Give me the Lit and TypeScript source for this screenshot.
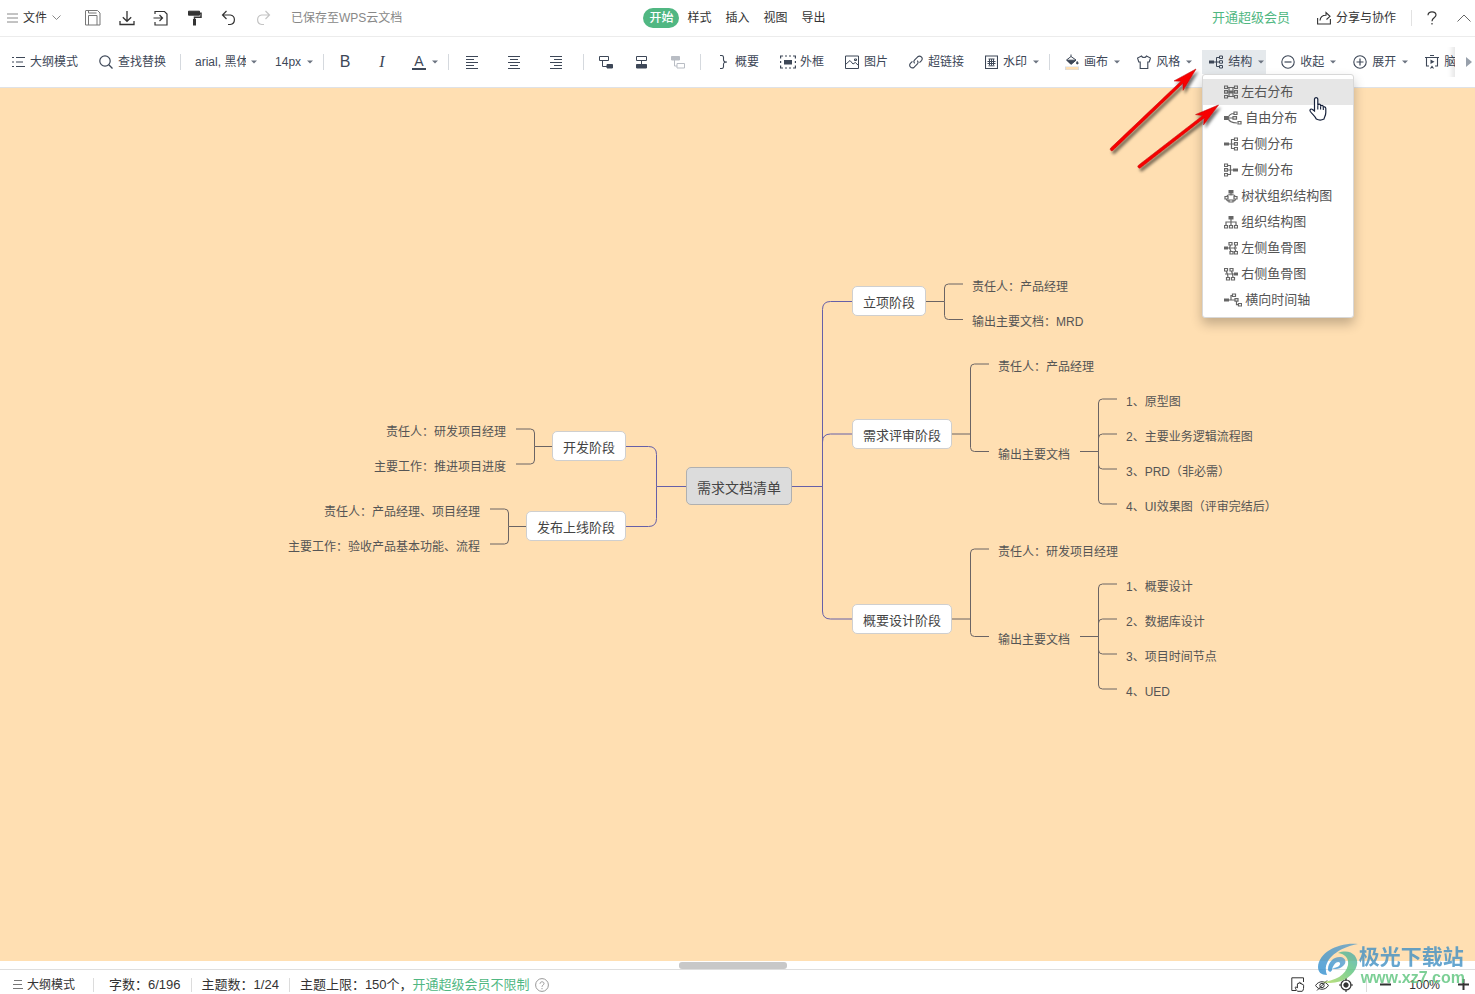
import { LitElement, html, css, svg } from "lit";
import { customElement, state } from "lit/decorators.js";
import { classMap } from "lit/directives/class-map.js";
import { styleMap } from "lit/directives/style-map.js";

const icon = (w: number, h: number, body: unknown) => html`<svg
  class="ic" width=${w} height=${h} viewBox="0 0 ${w} ${h}" fill="none"
  stroke="currentColor" stroke-width="1" aria-hidden="true">${body}</svg>`;

const caret = () => html`<svg class="caret" width="6" height="4" viewBox="0 0 6 4" aria-hidden="true"><path d="M0 0.5h6L3 3.5z" fill="currentColor"/></svg>`;

/* ---- title bar icons ---- */
const icSave = icon(16, 16, svg`<path d="M1 .5h11.5l2.5 2.5v12H.5V1a.5.5 0 0 1 .5-.5z"/><path d="M3.5 15V5.5h8.500V15M3.500 .5v2.500h8"/>`);
const icDownload = icon(16, 16, svg`<path d="M8 1v10M3.800 7.200L8 11.300l4.200-4.100M1 11v3.500h14V11" stroke-width="1.300"/>`);
const icExit = icon(16, 16, svg`<path d="M2 4V1.500h9.500L14 4v11H2v-3" stroke-width="1.200"/><path d="M.5 8h9M6.500 5l3 3-3 3" stroke-width="1.200"/>`);
const icPainter = icon(16, 16, svg`<path d="M1.500 1.200h11v4h-11z" fill="currentColor"/><path d="M12.500 3.200H14v4H7.500V10" stroke-width="1.500"/><path d="M6 9h3v6.500H6z" fill="currentColor" stroke="none"/>`);
const icUndo = icon(16, 16, svg`<path d="M5.500 1L1.500 5l4 4M1.500 5h7.800a4.800 4.800 0 0 1 0 9.500H7" stroke-width="1.200"/>`);
const icRedo = icon(16, 16, svg`<path d="M10.500 1l4 4-4 4M14.500 5H6.700a4.800 4.800 0 0 0 0 9.500H9" stroke-width="1.200"/>`);
const icShare = icon(14, 14, svg`<path d="M.6 7v6h12.800V8" stroke-width="1.100"/><path d="M3 9.500c.3-3.500 2.500-5.300 6-5.300V1.500L13 5.300 9.500 8.500" stroke-width="1.100"/>`);
const icHelp = icon(10, 14, svg`<path d="M1 4.200C1 2.200 2.600.8 5 .8s4 1.400 4 3.300C9 6.900 5 6.800 5 10.200M5 12v1.500" stroke-width="1.200"/>`);

/* ---- ribbon icons ---- */
const icList = icon(14, 12, svg`<path d="M0 1.500h2M0 6h2M0 10.500h2M4 1.500h9M4 6h7M4 10.500h9" stroke-width="1.100"/>`);
const icSearch = icon(14, 14, svg`<circle cx="6" cy="6" r="5.200" stroke-width="1.200"/><path d="M9.800 9.800l3.700 3.700" stroke-width="1.300"/>`);
const alignIcon = (starts: number[]) => icon(14, 14, svg`${[0, 1, 2, 3, 4].map((i) => svg`<path d="M${i % 2 ? starts[1] : starts[0]} ${i * 3 + 1.5}h${i % 2 ? 8 : 12}" stroke-width="1"/>`)}`);
const icSub = icon(14, 14, svg`<path d="M.5 1.500h9v4h-9z"/><path d="M3.500 5.500v6H8"/><path d="M8 9.500h5.500v3.500H8z" fill="currentColor"/>`);
const icTopic = icon(14, 14, svg`<path d="M1.500 1.500h10v4h-10zM6.500 5.500V9"/><path d="M1.500 9.500h10V13h-10z" fill="currentColor"/>`);
const icParent = icon(14, 14, svg`<path d="M.5 1.500h8V5h-8z" fill="currentColor"/><path d="M3.500 5v6H6M6 8.500h7.500V13H6z"/>`);
const icBrace = icon(14, 14, svg`<path d="M3 .5h1.500C6 .5 6.500 1 6.500 2.300v2.400c0 1.400.9 2.300 3.500 2.300-2.600 0-3.500.9-3.500 2.300v2.400c0 1.300-.5 1.800-2 1.800H3" stroke-width="1.100"/>`);
const icFrame = icon(16, 14, svg`<path d="M.6 3.500v-2.500h2.500M5 1h2M9 1h2M13 1h2.400v2.500M15.400 6v2M15.400 10.500V13H13M11 13H9M7 13H5M3 13H.6v-2.500M.6 8V6" stroke-width="1.200"/><path d="M4 5h8v4.500H4z" fill="currentColor" stroke="none"/>`);
const icImage = icon(14, 14, svg`<path d="M.5 1h13v12.500H.5z"/><path d="M.5 9.500L5 5.500l3 3.500 2.300-1.500 3.200 3M9.500 4h2v1.500h-2z"/>`);
const icLink = icon(14, 14, svg`<path d="M5.600 8.400c-1-1.300-.9-2.600.1-3.600l3-3a2.700 2.700 0 0 1 3.800 3.800l-2 2M8.300 5.600c1 1.300.9 2.600-.1 3.600l-3 3a2.700 2.700 0 0 1-3.800-3.800l2-2" stroke-width="1.100"/>`);
const icWater = icon(13, 14, svg`<path d="M.5 1h12v12.500H.5z" stroke-width="1.100"/><path d="M3.500 4h6M2.500 6.500h8M2.500 8.500h8M6.500 4v6.500M4.500 4v6M8.500 4v6M3.500 10.800h6"/>`);
const icFill = icon(14, 16, svg`<path d="M6 .5v2M1.500 6L6 2.500l5 3.500-5 4.200z"/><path d="M2 6.200h9L6 10.200z" fill="currentColor"/><path d="M12.200 7.500c1.500 2 .8 2.500 0 2.500s-1-.8 0-2.500z" fill="currentColor"/><path d="M0 12.500h14v3.500H0z" fill="#d9dde2" stroke="none"/><path d="M1 13h12v2.500H1z" fill="#ffdfb2" stroke="none"/>`);
const icShirt = icon(14, 14, svg`<path d="M4.500 1c.6 2 4.400 2 5 0l4 2-1.300 4H10.800v6.500H3.200V7H1.800L.5 3z" stroke-width="1.100"/>`);
const icMinusC = icon(14, 14, svg`<circle cx="7" cy="7" r="6.200" stroke-width="1.100"/><path d="M3.500 7h7" stroke-width="1.200"/>`);
const icPlusC = icon(14, 14, svg`<circle cx="7" cy="7" r="6.200" stroke-width="1.100"/><path d="M3.500 7h7M7 3.500v7" stroke-width="1.200"/>`);
const icPlay = icon(14, 14, svg`<path d="M5 .5h4M0 2.500h14M1.500 2.500v8.500H4M10 11h2.500V2.500M5.500 13.500L7 11.500l1.500 2" stroke-width="1.100"/><path d="M5.500 4.500v4.500l4-2.200z" fill="currentColor" stroke="none"/>`);

/* ---- structure icons ---- */
const icRight = icon(14, 14, svg`<path d="M0 5.500h5v3H0z" fill="currentColor" stroke="none"/><path d="M5 7h5M10 2.500H7.500v9H10"/><path d="M10.500 1h3v2.500h-3zM10.500 5.700h3v2.500h-3zM10.500 10.500h3V13h-3z"/>`);
const icLeft = icon(14, 14, svg`<path d="M9 5.500h5v3H9z" fill="currentColor" stroke="none"/><path d="M9 7H4M4 2.500h2.500v9H4"/><path d="M.5 1h3v2.500h-3zM.5 5.700h3v2.500h-3zM.5 10.500h3V13h-3z"/>`);
const icBoth = icon(14, 14, svg`<path d="M5 5.500h4v3H5z" fill="currentColor" stroke="none"/><path d="M3.500 2.500h7M3.500 7h7M3.500 11.500h7M5 2v10M9 2v10"/><path d="M.5 1h3v2.500h-3zM.5 5.700h3v2.500h-3zM.5 10.500h3V13h-3zM10.500 1h3v2.500h-3zM10.500 5.700h3v2.500h-3zM10.500 10.500h3V13h-3z"/>`);
const icFree = icon(18, 14, svg`<path d="M0 5h4v4H0z" fill="currentColor" stroke="none"/><path d="M4 7h5M4 7c1-3 3-4.500 6-4.500M4 7c1 3.500 4 5 9 5M10 1h3v2.500h-3zM9 5.700h3.500v2.500H9zM14 10.500h3V13h-3z"/>`);
const icTree = icon(14, 14, svg`<path d="M4.500 1h5v3.500h-5z" fill="currentColor" stroke="none"/><path d="M7 4v2.500M2.500 8C3 6 5 5.500 7 5.500S11 6 11.500 8M1 7.500h3V10H1zM10 7.500h3V10h-3zM2.500 10.500c.3 1 1 1.700 2.500 1.700M11.500 10.500c-.3 1-1 1.700-2.500 1.700M5 11h4v2H5z"/>`);
const icOrg = icon(14, 14, svg`<path d="M4.500 1h5v3.500h-5z" fill="currentColor" stroke="none"/><path d="M7 4v6M2 10V7h10v3M.5 10.500h3V13h-3zM5.500 10.500h3V13h-3zM10.500 10.500h3V13h-3z"/>`);
const icFishL = icon(14, 14, svg`<path d="M0 5.500h4v3H0z" fill="currentColor" stroke="none"/><path d="M4 7h9M5 1.500h3V4H5zM10.500 1.500h3V4h-3zM6 10.500h3V13H6zM10.500 10.500h3V13h-3zM6.500 4L5.500 7l1.500 3.500M12 4l-1.500 3 1.500 3.500"/>`);
const icFishR = icon(14, 14, svg`<path d="M10 5.500h4v3h-4z" fill="currentColor" stroke="none"/><path d="M10 7H1M.5 1.500h3V4h-3zM6 1.500h3V4H6zM2.500 10.500h3V13h-3zM7.500 10.500h3V13h-3zM2 4l1.500 3L4 10.500M7.500 4l1 3 .5 3.500"/>`);
const icTime = icon(18, 14, svg`<path d="M0 5.500h5v3H0z" fill="currentColor" stroke="none"/><path d="M5 7h6M7 7V2.500h1.500M8.500 1h3v2.500h-3zM11 5.700h3v2.500h-3zM12.500 8.200v3.500h2M14.500 10.500h3V13h-3z"/>`);

/* ---- status bar icons ---- */
const icHand = icon(14, 15, svg`<path d="M12.500 5V.8H.8v12.700H5"/><path d="M6.500 14.300c-1-1-2.300-3-2.300-4 .8-.8 1.700.2 2.200.8V7c.3-1 1.200-1 1.500 0V6c.3-1 1.400-1 1.600 0v1c.4-.9 1.400-.8 1.600 0v1c.4-.8 1.500-.6 1.500.3 0 2.200.2 4.500-1.300 6z"/>`);
const icEye = icon(14, 14, svg`<path d="M.6 7.500C3.500 2.500 10.500 2.500 13.400 7.500 10.500 12.500 3.500 12.500.6 7.500zM2 12.500L12 2.500"/><circle cx="7" cy="7.500" r="2.200"/>`);
const icTarget = icon(14, 14, svg`<circle cx="7" cy="7" r="5" stroke-width="1.200"/><path d="M7 0v3M7 11v3M0 7h3M11 7h3" stroke-width="1.200"/><circle cx="7" cy="7" r="2.200" fill="currentColor"/>`);

interface MapNode { text: string; x: number; y: number; w?: number; kind: "root" | "topic" | "leaf" | "leaf-left"; }

/* y is the vertical middle of the branch that the node hangs on */
const NODES: MapNode[] = [
  { kind: "root", text: "需求文档清单", x: 686, y: 398, w: 106 },
  { kind: "topic", text: "立项阶段", x: 852, y: 213, w: 74 },
  { kind: "topic", text: "需求评审阶段", x: 852, y: 346, w: 100 },
  { kind: "topic", text: "概要设计阶段", x: 852, y: 531, w: 100 },
  { kind: "topic", text: "开发阶段", x: 552, y: 358, w: 74 },
  { kind: "topic", text: "发布上线阶段", x: 526, y: 438, w: 100 },
  { kind: "leaf", text: "责任人：产品经理", x: 972, y: 196 },
  { kind: "leaf", text: "输出主要文档：MRD", x: 972, y: 231 },
  { kind: "leaf", text: "责任人：产品经理", x: 998, y: 276 },
  { kind: "leaf", text: "输出主要文档", x: 998, y: 364 },
  { kind: "leaf", text: "1、原型图", x: 1126, y: 311 },
  { kind: "leaf", text: "2、主要业务逻辑流程图", x: 1126, y: 346 },
  { kind: "leaf", text: "3、PRD（非必需）", x: 1126, y: 381 },
  { kind: "leaf", text: "4、UI效果图（评审完结后）", x: 1126, y: 416 },
  { kind: "leaf", text: "责任人：研发项目经理", x: 998, y: 461 },
  { kind: "leaf", text: "输出主要文档", x: 998, y: 549 },
  { kind: "leaf", text: "1、概要设计", x: 1126, y: 496 },
  { kind: "leaf", text: "2、数据库设计", x: 1126, y: 531 },
  { kind: "leaf", text: "3、项目时间节点", x: 1126, y: 566 },
  { kind: "leaf", text: "4、UED", x: 1126, y: 601 },
  { kind: "leaf-left", text: "责任人：研发项目经理", x: 506, y: 341 },
  { kind: "leaf-left", text: "主要工作：推进项目进度", x: 506, y: 376 },
  { kind: "leaf-left", text: "责任人：产品经理、项目经理", x: 480, y: 421 },
  { kind: "leaf-left", text: "主要工作：验收产品基本功能、流程", x: 480, y: 456 },
];

interface Branch { from: number; spine: number; to: number; y: number; ends: number[]; r: number; main?: boolean; }

const BRANCHES: Branch[] = [
  { from: 792, spine: 822.5, to: 852, y: 398.5, ends: [213.5, 346, 531], r: 8, main: true },
  { from: 686, spine: 656.5, to: 626, y: 398.5, ends: [358.5, 438.5], r: 8, main: true },
  { from: 926, spine: 944.5, to: 963, y: 213.5, ends: [196, 231.5], r: 4 },
  { from: 952, spine: 970.5, to: 989, y: 346, ends: [276, 363.5], r: 4 },
  { from: 1080, spine: 1098.5, to: 1117, y: 363.5, ends: [311, 346, 381, 416], r: 4 },
  { from: 952, spine: 970.5, to: 989, y: 531, ends: [461, 548.5], r: 4 },
  { from: 1080, spine: 1098.5, to: 1117, y: 548.5, ends: [496, 531, 566, 601], r: 4 },
  { from: 552, spine: 534.5, to: 516, y: 358.5, ends: [341, 376], r: 4 },
  { from: 526, spine: 508.5, to: 490, y: 438.5, ends: [421, 456], r: 4 },
];

function branchPath(b: Branch): string {
  const side = Math.sign(b.to - b.from);
  const stem = `M${b.from} ${b.y}H${b.spine}`;
  return stem + b.ends.map((e) => {
    const dir = Math.sign(e - b.y);
    return `M${b.spine} ${b.y}V${e - dir * b.r}Q${b.spine} ${e} ${b.spine + side * b.r} ${e}H${b.to}`;
  }).join("");
}

const MENU: [string, unknown][] = [
  ["左右分布", icBoth], ["自由分布", icFree], ["右侧分布", icRight], ["左侧分布", icLeft],
  ["树状组织结构图", icTree], ["组织结构图", icOrg], ["左侧鱼骨图", icFishL], ["右侧鱼骨图", icFishR],
  ["横向时间轴", icTime],
];

const base = css`
  :host, * { box-sizing: border-box; }
  button, select, a { font: inherit; color: inherit; }
  button { border: 0; background: none; padding: 0; margin: 0; display: inline-flex; align-items: center; white-space: nowrap; cursor: pointer; }
  a { text-decoration: none; }
  svg { display: block; flex: none; }
`;

@customElement("title-bar")
class TitleBar extends LitElement {
  @state() private tab = "开始";
  static styles = [base, css`
    :host { display: grid; grid-template-columns: 1fr auto 1fr; align-items: center; height: 37px; border-bottom: 1px solid #ececec; font-size: 12px; line-height: 20px; color: #333; }
    .left { display: flex; align-items: center; padding-left: 7px; }
    .file { gap: 5px; margin-right: 24px; }
    .file .lines, .file .down { color: #888; }
    .tools { display: flex; gap: 18px; margin-right: 20px; }
    .grey { color: #777; }
    .off { color: #c4c4c4; }
    .saved { color: #888; white-space: nowrap; }
    .tabs { display: flex; }
    .tab { padding: 0 7px; }
    .tab.on { margin: 0 1px; padding: 0 6px; border-radius: 10px; background: #50b782; color: #fff; font-weight: 500; }
    .right { display: flex; align-items: center; justify-content: flex-end; padding-right: 4px; }
    .vip { font-size: 13px; color: #50b782; margin-right: 27px; }
    .share { gap: 5px; }
    .sep { width: 1px; height: 16px; background: #e2e2e2; margin: 0 15px; }
    .up { margin-left: 20px; color: #666; }
  `];
  render() {
    return html`
      <div class="left">
        <button class="file"><span class="lines">${icon(11, 10, svg`<path d="M0 1h11M0 5h11M0 9h11"/>`)}</span>文件<span class="down">${icon(9, 6, svg`<path d="M.5 .5l4 4 4-4"/>`)}</span></button>
        <div class="tools">
          <button class="grey" aria-label="保存">${icSave}</button>
          <button aria-label="下载">${icDownload}</button>
          <button aria-label="导出">${icExit}</button>
          <button aria-label="格式刷">${icPainter}</button>
          <button aria-label="撤销">${icUndo}</button>
          <button class="off" aria-label="恢复">${icRedo}</button>
        </div>
        <span class="saved">已保存至WPS云文档</span>
      </div>
      <nav class="tabs">
        ${["开始", "样式", "插入", "视图", "导出"].map((t) => html`<button class=${classMap({ tab: true, on: t === this.tab })} @click=${() => (this.tab = t)}>${t}</button>`)}
      </nav>
      <div class="right">
        <a class="vip" href="#vip">开通超级会员</a>
        <button class="share">${icShare}分享与协作</button>
        <span class="sep"></span>
        <button aria-label="帮助">${icHelp}</button>
        <button class="up" aria-label="收起功能区">${icon(14, 8, svg`<path d="M.5 7.500L7 1l6.500 6.500"/>`)}</button>
      </div>`;
  }
}

@customElement("structure-menu")
class StructureMenu extends LitElement {
  @state() private current = 0;
  static styles = [base, css`
    :host { display: block; width: 152px; padding: 4px 0; border: 1px solid #d8d8d8; border-radius: 3px; background: #fff; box-shadow: 0 6px 12px rgba(0, 0, 0, 0.24); font-size: 13px; color: #555; }
    button { display: flex; gap: 3px; width: 100%; height: 26px; padding-left: 21px; color: #555; }
    .on { background: #e6e6e6; }
    .ic { color: #666; stroke-width: 1.2; }
  `];
  render() {
    return MENU.map(([label, ic], i) => html`<button class=${i === this.current ? "on" : ""} @click=${() => (this.current = i)}>${ic}${label}</button>`);
  }
}

@customElement("ribbon-bar")
class RibbonBar extends LitElement {
  @state() private open = true;
  static styles = [base, css`
    :host { display: flex; position: relative; z-index: 2; height: 51px; border-bottom: 1px solid #dfe2e6; background: #fff; font-size: 12px; line-height: 24px; color: #3d4757; }
    .items { flex: 1; min-width: 0; display: flex; align-items: center; padding-left: 12px; white-space: nowrap; }
    .items > * { flex: none; }
    .group { display: flex; align-items: center; }
    .sep { width: 1px; height: 16px; background: #d5d9de; }
    .caret { color: #6b7380; margin-left: 1px; }
    .tool { gap: 5px; height: 24px; }
    .tool.near { gap: 4px; }
    .find { gap: 21px; padding-right: 14px; }
    .fonts { gap: 18px; padding: 0 10px 0 14px; }
    .pick { display: grid; align-items: center; }
    .pick > * { grid-area: 1 / 1; }
    .pick .caret { justify-self: end; pointer-events: none; }
    select { appearance: none; border: 0; background: none; padding: 0 11px 0 0; height: 24px; outline: 0; }
    .family { width: 62px; }
    .size { width: 38px; }
    .marks { gap: 23px; padding: 0 10px 0 14px; }
    .mark { width: 14px; justify-content: center; font-size: 16px; }
    .it { font-family: "Liberation Serif", serif; font-style: italic; }
    .color { gap: 5px; }
    .color .ltr { width: 14px; height: 16px; line-height: 15px; font-size: 14px; text-align: center; border-bottom: 2px solid #3d4757; }
    .aligns { gap: 28px; padding: 0 20px 0 16px; }
    .nodes { gap: 22px; padding: 0 15px; }
    .off { color: #b9bdc4; }
    .insert { gap: 21px; padding: 0 10px 0 16px; }
    .looks { gap: 8px; padding-left: 8px; }
    .looks .tool { padding: 0 2px 0 7px; }
    .tool.on { background: #e5e9ec; }
    .drop { position: relative; display: flex; }
    structure-menu { position: absolute; top: 24px; left: 0; }
    .pointers { position: absolute; left: -96px; top: 14px; pointer-events: none; }
    .hand { position: absolute; left: 107px; top: 46px; pointer-events: none; }
    .more { position: relative; z-index: 1; flex: none; width: 20px; justify-content: flex-end; padding-right: 3px; color: #98a0ab; background: #fff; box-shadow: -3px 0 5px rgba(0, 0, 0, 0.1); clip-path: inset(10px 0 10px -8px); }
  `];
  private tool(ic: unknown, text: string, extra = "") {
    return html`<button class="tool ${extra === "near" ? "near" : ""}">${ic}${text}${extra === "drop" ? caret() : ""}</button>`;
  }
  render() {
    const sep = html`<span class="sep"></span>`;
    return html`
      <div class="items">
        <div class="group find">${this.tool(icList, "大纲模式", "near")}${this.tool(icSearch, "查找替换")}</div>
        ${sep}
        <div class="group fonts">
          <span class="pick"><select class="family" aria-label="字体"><option>arial, 黑体</option></select>${caret()}</span>
          <span class="pick"><select class="size" aria-label="字号"><option>14px</option></select>${caret()}</span>
        </div>
        ${sep}
        <div class="group marks">
          <button class="mark" aria-label="加粗">B</button>
          <button class="mark it" aria-label="斜体">I</button>
          <button class="color" aria-label="文字颜色"><span class="ltr">A</span>${caret()}</button>
        </div>
        ${sep}
        <div class="group aligns">
          <button aria-label="左对齐">${alignIcon([1, 1])}</button>
          <button aria-label="居中">${alignIcon([1, 3])}</button>
          <button aria-label="右对齐">${alignIcon([1, 5])}</button>
        </div>
        ${sep}
        <div class="group nodes">
          <button aria-label="子主题">${icSub}</button>
          <button aria-label="同级主题">${icTopic}</button>
          <button class="off" aria-label="父主题">${icParent}</button>
        </div>
        ${sep}
        <div class="group insert">
          ${this.tool(icBrace, "概要", "near")}${this.tool(icFrame, "外框", "near")}${this.tool(icImage, "图片")}${this.tool(icLink, "超链接")}${this.tool(icWater, "水印", "drop")}
        </div>
        ${sep}
        <div class="group looks">
          ${this.tool(icFill, "画布", "drop")}${this.tool(icShirt, "风格", "drop")}
          <div class="drop">
            <button class="tool on" aria-expanded=${this.open} @click=${() => (this.open = !this.open)}>${icRight}结构${caret()}</button>
            ${this.open ? html`<structure-menu></structure-menu>` : ""}
            <svg class="hand" width="18" height="26" viewBox="0 0 18 26" aria-hidden="true"><path d="M5.500 15V3a1.700 1.700 0 0 1 3.300 0v6.500c0-1.800 2.700-1.800 2.800 0v1c.2-1.600 2.500-1.500 2.700.2v1c.3-1.300 2.500-1.200 2.500.7v4.100c0 3-1.300 4-1.800 6.500-2.400 1.300-5.300 1.300-7.700 0C6.500 20.500 3 18 1.200 15.200c-.8-1.800 1-2.800 2.300-1.700z" fill="#fff" stroke="#15203a" stroke-width="1.200"/><path d="M8.800 9.500v4M11.600 10.500v3M14.300 11.500v2.500" stroke="#15203a" stroke-width="1.100"/></svg>
            <svg class="pointers" width="126" height="110" viewBox="0 0 126 110" aria-hidden="true">
              <defs><filter id="drop" x="-20%" y="-20%" width="150%" height="150%"><feDropShadow dx="2" dy="3" stdDeviation="1.500" flood-color="#000" flood-opacity=".55"/></filter></defs>
              <g filter="url(#drop)" fill="#f80000" stroke="#c01010" stroke-width=".6" stroke-linejoin="round">
                <path d="M90 5L77.100 26.300 77 19.200 6.800 86.400A1.600 1.600 0 0 1 4.600 84.100L75 17.200 68.100 16.900z"/>
                <path d="M112.500 41L97.600 60.800 98.300 53.900 34.500 103.800A1.600 1.600 0 0 1 32.500 101.200L96.500 51.700 89.600 50.600z"/>
              </g>
            </svg>
          </div>
          ${this.tool(icMinusC, "收起", "drop")}${this.tool(icPlusC, "展开", "drop")}${this.tool(icPlay, "脑图")}
        </div>
      </div>
      <button class="more" aria-label="更多"><svg width="6" height="10" viewBox="0 0 6 10"><path d="M0 0v10l6-5z" fill="currentColor"/></svg></button>`;
  }
}

@customElement("mind-canvas")
class MindCanvas extends LitElement {
  static styles = [base, css`
    :host { display: block; position: relative; overflow: hidden; background: #ffdfb2; color: #555; }
    .wires { position: absolute; inset: 0; width: 100%; height: 100%; fill: none; stroke: #6b6464; }
    .wires .main { stroke: #6660a8; }
    .node { position: absolute; white-space: nowrap; font-size: 12px; line-height: 20px; transform: translateY(-50%); }
    .leaf, .leaf-left { padding-top: 6px; }
    .leaf-left { transform: translate(-100%, -50%); }
    .topic, .root { padding-top: 2px; border: 1px solid #cfcfcf; border-radius: 5px; background: #fff; text-align: center; font-size: 13px; height: 30px; line-height: 28px; color: #444; }
    .root { height: 38px; line-height: 36px; font-size: 14px; background: #dcdcdc; border-color: #b0b0b0; }
  `];
  render() {
    return html`
      <svg class="wires" aria-hidden="true">${BRANCHES.map((b) => svg`<path class=${b.main ? "main" : ""} d=${branchPath(b)}/>`)}</svg>
      ${NODES.map((n) => html`<div class="node ${n.kind}" style=${styleMap({ left: `${n.x}px`, top: `${n.y}px`, width: n.w ? `${n.w}px` : null })}>${n.text}</div>`)}`;
  }
}

@customElement("status-bar")
class StatusBar extends LitElement {
  static styles = [base, css`
    :host { display: flex; align-items: center; position: relative; height: 25px; padding: 5px 6px 0 13px; border-top: 1px solid #dedede; background: #fff; font-size: 13px; line-height: 20px; color: #333; white-space: nowrap; }
    .mode { gap: 4px; font-size: 12px; }
    .mode .ic { color: #777; }
    .sep { width: 1px; height: 14px; background: #dcdcdc; margin: 0 10px; }
    .first { margin: 0 15px 0 18px; }
    .last { margin: 0 13px; }
    .vip { color: #50b782; }
    .q { margin-left: 5px; color: #999; }
    .fill { flex: 1; }
    .views { display: flex; gap: 10px; }
    .zoom { display: flex; align-items: center; gap: 18px; font-size: 12px; }
    .brand { position: absolute; right: 10px; bottom: 7px; display: flex; align-items: flex-end; opacity: 0.8; pointer-events: none; }
    .words { display: flex; flex-direction: column; font-weight: 700; }
    .cn { font-size: 21px; line-height: 24px; color: #4090c4; }
    .url { font-size: 16px; line-height: 18px; color: #5cc47c; padding-left: 2px; }
  `];
  render() {
    return html`
      <button class="mode">${icon(10, 9, svg`<path d="M1 .5h8M0 4.500h9M0 8.500h10"/>`)}大纲模式</button>
      <span class="sep first"></span><span>字数：6/196</span>
      <span class="sep"></span><span>主题数：1/24</span>
      <span class="sep"></span><span>主题上限：150个，<a class="vip" href="#vip">开通超级会员不限制</a></span>
      <button class="q" aria-label="说明">${icon(14, 14, svg`<circle cx="7" cy="7" r="6.400"/><path d="M5 5.800c0-2.600 4-2.600 4-.3C9 7 7 7 7 8.800M7 10v1.200"/>`)}</button>
      <span class="fill"></span>
      <div class="views">
        <button aria-label="拖动">${icHand}</button>
        <button aria-label="显示">${icEye}</button>
        <button aria-label="定位">${icTarget}</button>
      </div>
      <span class="sep last"></span>
      <div class="zoom">
        <button aria-label="缩小">${icon(11, 11, svg`<path d="M0 5.500h11" stroke-width="2"/>`)}</button>
        <span>100%</span>
        <button aria-label="放大">${icon(11, 11, svg`<path d="M0 5.500h11M5.500 0v11" stroke-width="2"/>`)}</button>
      </div>
      <div class="brand">
        <svg width="42" height="44" viewBox="0 0 42 44" aria-hidden="true">
          <defs>
            <linearGradient id="blue" x1="1" y1="0" x2="0" y2="1"><stop offset="0" stop-color="#5f9fc8"/><stop offset="1" stop-color="#2f8fd0"/></linearGradient>
            <linearGradient id="green" x1="0" y1="1" x2="1" y2="0"><stop offset="0" stop-color="#b9dc5a"/><stop offset="0.6" stop-color="#5cc47c"/><stop offset="1" stop-color="#4aa8b8"/></linearGradient>
          </defs>
          <path d="M41 1C22-1 2 9 1 24c0 5 3 8 9 8C5 20 16 6 41 1z" fill="url(#blue)"/>
          <path d="M11 26c0-7 6-13 13-12 5 1 6 6 2 9-3 3-8 4-11 2 4 0 9-2 8-5-2-3-7 1-8 7-1 3-4 2-4-1z" fill="url(#blue)"/>
          <path d="M21 10C33 5 42 13 40 22 37 34 22 43 5 39c13-1 24-7 26-17 1-7-3-11-10-12z" fill="url(#green)"/>
        </svg>
        <div class="words"><span class="cn">极光下载站</span><span class="url">www.xz7.com</span></div>
      </div>`;
  }
}

@customElement("app-root")
class AppRoot extends LitElement {
  static styles = css`
    :host { display: flex; flex-direction: column; height: 100vh; overflow: hidden; background: #fff; font-family: "Liberation Sans", "Noto Sans CJK SC", sans-serif; }
    title-bar, ribbon-bar, status-bar { flex: none; }
    mind-canvas { flex: 1; min-height: 0; }
    .track { flex: none; display: flex; justify-content: center; align-items: center; height: 8px; }
    .thumb { width: 108px; height: 7px; border-radius: 3px; background: #c8c8c8; margin-right: 9px; }
  `;
  render() {
    return html`
      <title-bar></title-bar>
      <ribbon-bar></ribbon-bar>
      <mind-canvas></mind-canvas>
      <div class="track"><div class="thumb"></div></div>
      <status-bar></status-bar>`;
  }
}
